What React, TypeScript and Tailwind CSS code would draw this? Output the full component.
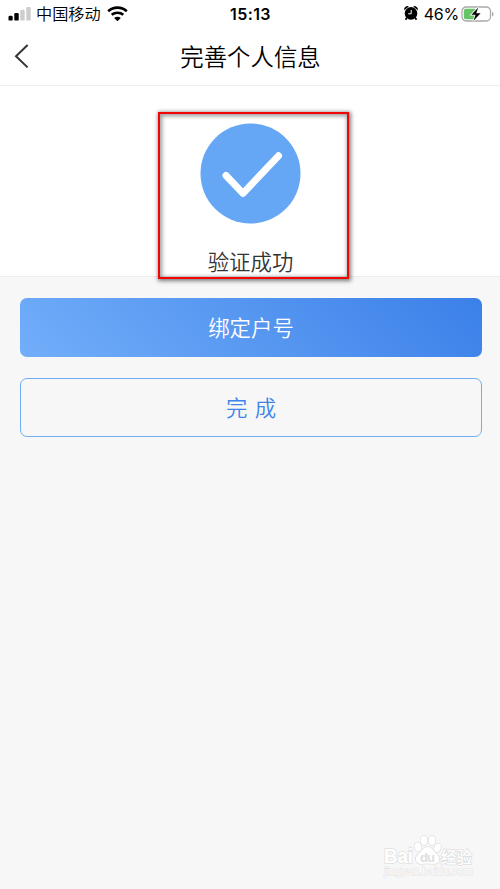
function StatusBar() {
  return (
    <header className="relative flex h-7 items-center justify-between pl-[8px] pr-[6px] text-black">
      <div className="flex items-center">
        <svg width="23" height="14" viewBox="0 0 23 14">
          <rect x="0.5" y="8.8" width="4.2" height="4.8" rx="1.2" fill="#000" />
          <rect x="6.3" y="6" width="4.4" height="7.6" rx="1.2" fill="#000" />
          <rect x="12.3" y="2.8" width="4.4" height="10.8" rx="1.2" fill="#cdcdcd" />
          <rect x="18.3" y="0" width="4.4" height="13.6" rx="1.2" fill="#cdcdcd" />
        </svg>
        <span className="ml-[5px] whitespace-nowrap text-[16.2px] font-[350] leading-7">中国移动</span>
        <svg className="ml-[6px]" width="21" height="16" viewBox="0 0 21 16" fill="none" stroke="#000">
          <path d="M1.2 5.2C6.5.4 14.5.4 19.8 5.2" strokeWidth="2.6" />
          <path d="M4.7 8.8C8 5.9 13 5.9 16.3 8.8" strokeWidth="2.5" />
          <path d="M10.5 15.2 7.2 12C9 10.4 12 10.4 13.8 12Z" fill="#000" stroke="none" />
        </svg>
      </div>
      <span className="absolute left-1/2 top-0 -translate-x-1/2 pl-px font-[Inter,sans-serif] text-[16px] font-semibold leading-7 tracking-[0.4px]">
        15:13
      </span>
      <div className="flex items-center">
        <svg className="relative -top-px" width="14" height="15" viewBox="0 0 14 15">
          <path d="M.3 4.3A3.3 3.3 0 0 1 4.8.4ZM13.7 4.3A3.3 3.3 0 0 0 9.2.4Z" fill="#000" />
          <path d="m3 11.5-1.5 2.3M11 11.5l1.5 2.3" stroke="#000" strokeWidth="1.7" />
          <circle cx="7" cy="7.4" r="6.3" fill="#000" />
          <path d="M7.2 4v3.8H4.2" fill="none" stroke="#fff" strokeWidth="1" />
        </svg>
        <span className="ml-[6px] font-[Inter,sans-serif] text-[16px] leading-7 tracking-[-0.2px]">46%</span>
        <svg className="ml-[2px]" width="33" height="16" viewBox="0 0 33 16">
          <rect x="1" y="1" width="28.5" height="14" rx="4.2" fill="#fff" stroke="#a9a9a9" strokeWidth="1.3" />
          <path d="M5 2.8h9v10.4H5A2.2 2.2 0 0 1 2.8 11V5A2.2 2.2 0 0 1 5 2.8Z" fill="#65c466" />
          <path d="M31 5.4q1.6 1 1.6 2.6T31 10.6Z" fill="#a9a9a9" />
          <path d="m17.2 1.5-6.8 7.2h4.2L12.4 15l7.2-7.8h-4.4Z" fill="#000" stroke="#fff" strokeWidth="1.6" paintOrder="stroke" />
        </svg>
      </div>
    </header>
  );
}

function NavBar() {
  return (
    <nav className="relative flex h-[58px] items-center justify-center border-b border-[#eeeeee]">
      <svg className="absolute left-[14px] top-[16px]" width="16" height="25" viewBox="0 0 16 25" fill="none" stroke="#333" strokeWidth="2">
        <path d="M13.6 1 2 12.2l11.6 11.2" />
      </svg>
      <h1 className="pl-px pt-[2px] text-[23.4px] font-[350] leading-[56px] text-black">完善个人信息</h1>
    </nav>
  );
}

function Watermark() {
  return (
    <div className="absolute left-[383px] top-[834px] w-[100px]">
      <svg width="100" height="46" viewBox="0 0 100 46">
        <g fill="#fff" stroke="#e0e0e0" strokeWidth="1.6" paintOrder="stroke" fontFamily="'Liberation Sans', 'Noto Sans CJK SC', sans-serif">
          <text x="1" y="29" fontSize="21" fontWeight="bold" textLength="29" lengthAdjust="spacingAndGlyphs">Bai</text>
          <ellipse cx="35" cy="13" rx="3.3" ry="4.5" transform="rotate(-15 35 13)" />
          <ellipse cx="41" cy="6.3" rx="3.3" ry="4.6" />
          <ellipse cx="49" cy="6.5" rx="3.3" ry="4.6" />
          <ellipse cx="54.5" cy="14" rx="3.2" ry="4.4" transform="rotate(20 54.5 14)" />
          <path d="M44.5 13C40 13 39 17 35.5 20C30 25 34 31 40 29.8Q44.5 29 49 29.8C56 31 59 25 53.5 20C50 16.5 49 13 44.5 13Z" />
          <text x="58" y="28.5" fontSize="16" fontWeight="500" textLength="31" lengthAdjust="spacingAndGlyphs">经验</text>
          <text x="1" y="41" fontSize="10.5" strokeWidth="0.9" textLength="89" lengthAdjust="spacingAndGlyphs">jingyan.baidu.com</text>
        </g>
        <text x="37" y="27.5" fontSize="13" fontWeight="bold" fill="#dedede" fontFamily="'Liberation Sans', sans-serif" textLength="15">du</text>
      </svg>
    </div>
  );
}

export default function App() {
  return (
    <div className="relative flex h-[889px] w-[500px] flex-col overflow-hidden bg-[#f7f7f7] font-['Liberation_Sans','Noto_Sans_CJK_SC',sans-serif]">
      <div className="bg-white">
        <StatusBar />
        <NavBar />
      </div>
      <section className="relative flex h-[191px] flex-col items-center border-b border-[#eeeeee] bg-white pl-px pt-[37px]">
        <svg className="shrink-0" width="101" height="101" viewBox="0 0 101 101">
          <circle cx="50.5" cy="50.5" r="50" fill="#65a6f5" />
          <path d="m26 52.5 17 17.8 35.5-37.5" fill="none" stroke="#fff" strokeWidth="7" strokeLinecap="round" strokeLinejoin="round" />
        </svg>
        <p className="mt-[23px] shrink-0 text-[21.4px] font-[350] leading-[32px] text-[#333]">验证成功</p>
        <div className="absolute left-[158px] top-[26px] z-10 h-[167px] w-[191px] border-2 border-[#f20505] shadow-[1px_1px_4px_1px_rgba(0,0,0,0.5),inset_1px_1px_4px_1px_rgba(0,0,0,0.4)]" />
      </section>
      <main className="flex flex-col gap-[21px] pl-[20px] pr-[18px] pt-[21px] text-[21.4px] font-[350]">
        <button className="h-[59px] rounded-[7px] bg-[linear-gradient(45deg,#72aef9,#3b80e9)] pt-[3px] text-white">绑定户号</button>
        <button className="h-[59px] rounded-[7px] border border-[#72acf3] pt-[3px] text-[#3f84ea] [word-spacing:1.5px]">完 成</button>
      </main>
      <Watermark />
    </div>
  );
}
